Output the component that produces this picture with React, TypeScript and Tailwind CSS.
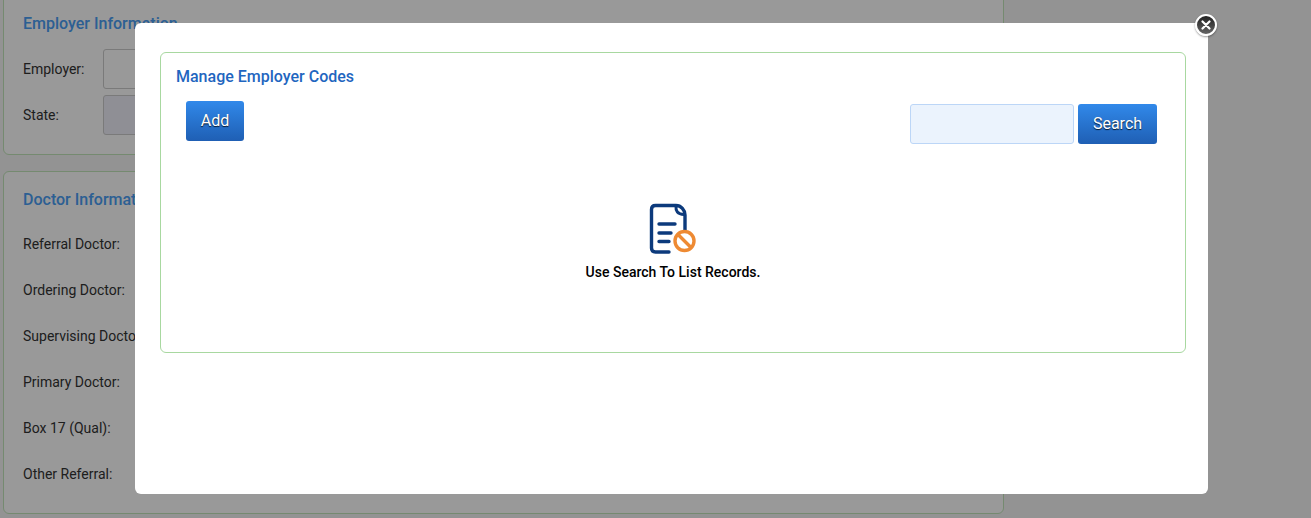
import React from 'react';

const doctorFields = [
  'Referral Doctor:',
  'Ordering Doctor:',
  'Supervising Doctor:',
  'Primary Doctor:',
  'Box 17 (Qual):',
  'Other Referral:',
];

const EmptyIcon: React.FC = () => (
  <svg width="48" height="52" viewBox="0 0 48 52" fill="none">
    <path
      d="M20 49H6.500C4 49 2.500 47.500 2.500 45V6.500C2.500 4 4 2.500 6.500 2.500H27C32 2.500 36 7 36 12V27"
      stroke="#0c3a7c"
      strokeWidth="3.400"
      strokeLinecap="round"
    />
    <path d="M27 3C26.500 8 28.500 11 35 11.500" stroke="#0c3a7c" strokeWidth="3" strokeLinecap="round" />
    <path d="M10 21H26M10 30H22M10 38.500H20" stroke="#0c3a7c" strokeWidth="3.400" strokeLinecap="round" />
    <circle cx="35.500" cy="38" r="9.500" fill="#fff" stroke="#ee8a33" strokeWidth="3.400" />
    <path d="M29 31.500L42 44.500" stroke="#ee8a33" strokeWidth="3.400" />
  </svg>
);

const App: React.FC = () => {
  return (
    <div className="relative h-[518px] w-full overflow-hidden bg-[#f5f5f5] font-['Roboto',sans-serif] text-[14px] text-[#333]">
      {/* Page behind the modal */}
      <div className="ml-[3px] flex w-[1001px] flex-col gap-[16px]">
        <div className="-mt-[10px] h-[165px] rounded-[6px] border border-[#c3e6bb] bg-white pl-[19px] pt-[23px]">
          <h2 className="text-[16px] font-medium leading-[20px] text-[#4a9ef5]">Employer Information</h2>
          <div className="mt-[15px] flex h-[40px] items-center">
            <span className="w-[80px]">Employer:</span>
            <div className="h-[40px] w-[300px] rounded-[3px] border border-[#ccc]" />
          </div>
          <div className="mt-[6px] flex h-[40px] items-center">
            <span className="w-[80px]">State:</span>
            <div className="h-[40px] w-[300px] rounded-[3px] border border-[#ccc] bg-[#eeeef8]" />
          </div>
        </div>
        <div className="h-[343px] rounded-[6px] border border-[#c3e6bb] bg-white pl-[19px] pt-[18px]">
          <h2 className="text-[16px] font-medium leading-[20px] text-[#4a9ef5]">Doctor Information</h2>
          <div className="mt-[11px] flex flex-col">
            {doctorFields.map((label) => (
              <div key={label} className="flex h-[46px] items-center">
                {label}
              </div>
            ))}
          </div>
        </div>
      </div>

      {/* Modal */}
      <div className="absolute inset-0 bg-black/40">
        <div className="absolute left-[135px] top-[23px] h-[471px] w-[1073px] rounded-[6px] bg-white pl-[25px] pt-[29px]">
          <div className="h-[301px] w-[1026px] rounded-[6px] border border-[#a8d8a0] px-[15px] pt-[14px]">
            <h3 className="text-[16px] font-medium leading-[20px] text-[#1f66c0]">Manage Employer Codes</h3>
            <div className="flex items-start justify-between pl-[10px] pr-[13px]">
              <button className="mt-[14px] h-[40px] w-[58px] rounded-[3px] bg-gradient-to-b from-[#3189ea] to-[#1f5fb4] text-[16px] text-white [text-shadow:0_1px_1px_rgba(0,0,0,0.8)]">
                Add
              </button>
              <div className="mt-[17px] flex gap-[4px]">
                <input className="h-[40px] w-[164px] rounded-[3px] border border-[#bcd6f7] bg-[#ebf3fd]" />
                <button className="h-[40px] w-[79px] rounded-[3px] bg-gradient-to-b from-[#3189ea] to-[#1f5fb4] text-[16px] text-white [text-shadow:0_1px_1px_rgba(0,0,0,0.8)]">
                  Search
                </button>
              </div>
            </div>
            <div className="mt-[59px] flex flex-col items-center">
              <EmptyIcon />
              <p className="mt-[9px] text-[14px] font-medium leading-[16px] text-black">Use Search To List Records.</p>
            </div>
          </div>
          {/* Close button */}
          <button className="absolute -right-[9px] -top-[9px] flex h-[22px] w-[22px] items-center justify-center rounded-full border-2 border-white bg-gradient-to-b from-[#222] to-[#666] shadow-[0_1px_2px_rgba(0,0,0,0.4)]">
            <svg width="10" height="10" viewBox="0 0 10 10">
              <path d="M1.500 1.500L8.500 8.500M8.500 1.500L1.500 8.500" stroke="#fff" strokeWidth="2.200" strokeLinecap="round" />
            </svg>
          </button>
        </div>
      </div>
    </div>
  );
};

export default App;
